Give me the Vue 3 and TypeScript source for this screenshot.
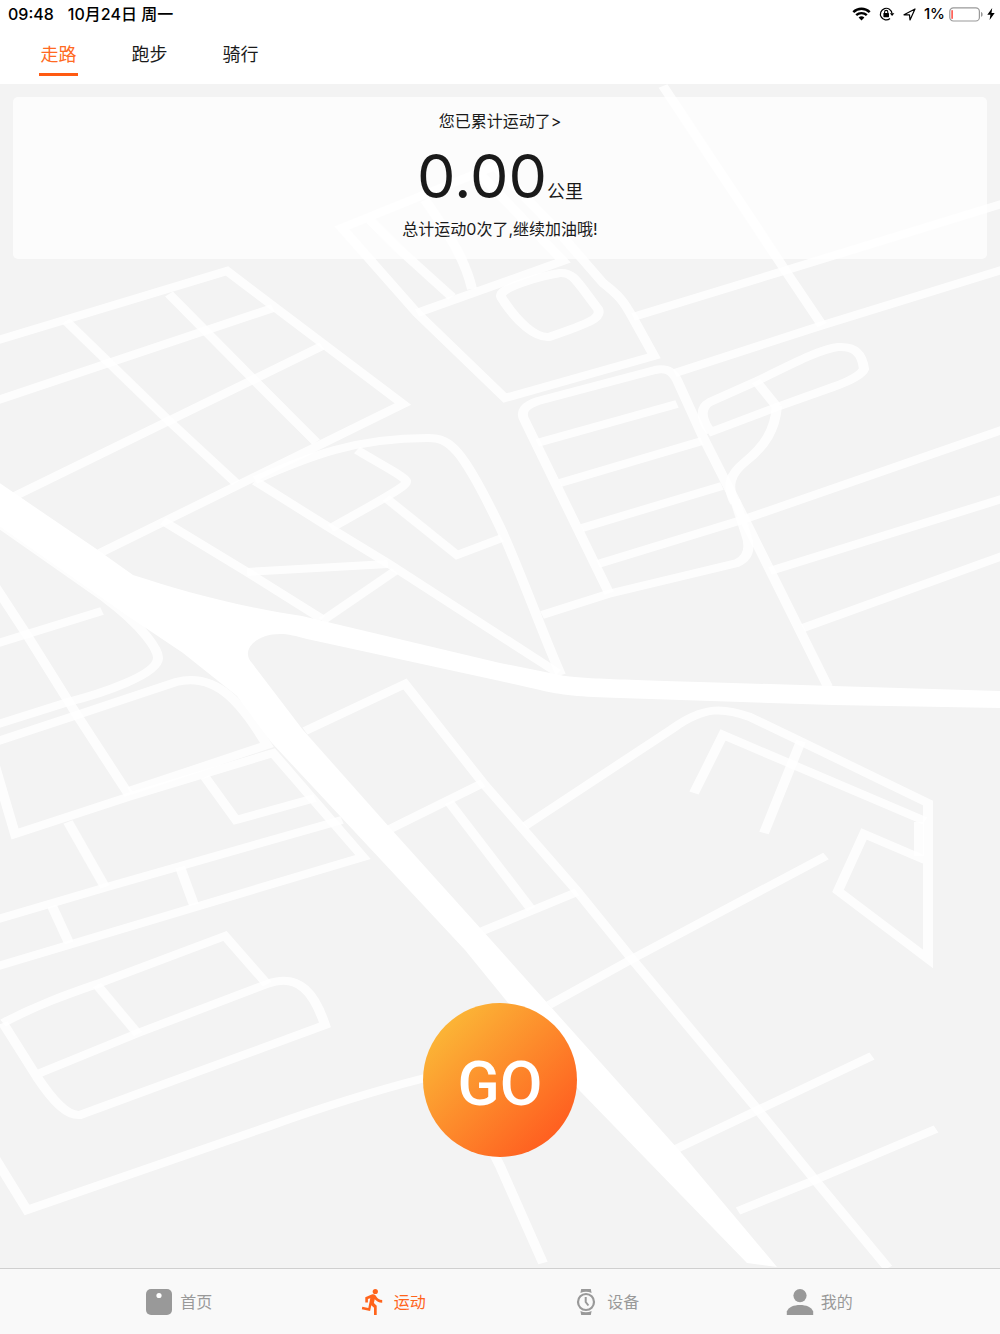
<script setup lang="ts">
import { ref } from 'vue'

type NavKey = 'home' | 'sport' | 'device' | 'mine'

const modes = ['走路', '跑步', '骑行']
const activeMode = ref(0)

const navItems: { key: NavKey; label: string }[] = [
  { key: 'home', label: '首页' },
  { key: 'sport', label: '运动' },
  { key: 'device', label: '设备' },
  { key: 'mine', label: '我的' },
]
const activeNav = ref<NavKey>('sport')

const distance = ref(0)
const count = ref(0)

const streets = [
  'M-5 341 L227 271 L403 404 L100 553',
  'M-5 401 L273 308',
  'M322 346 L15 496',
  'M66 321 L168 420 L236 483',
  'M169 294 L254 380 L316 442',
  'M255 480 C310 456 355 438 428 438 C450 438 462 448 500 527 C520 570 545 640 561 675',
  'M357 450 C380 464 404 476 406 481 C407 486 390 495 331 528',
  'M386 498 L457 555 L502 538',
  'M255 481 L330 528 L389 564 L558 673',
  'M163 521 L247 572 L322 619',
  'M247 572 L388 564',
  'M395 571 L322 621',
  'M-5 521 L105 598 C145 628 158 650 158 658 C158 675 100 694 68 702 L-5 725',
  'M-5 644 L102 611',
  'M-5 586 L27 635 L77 715 L129 795',
  'M-5 742 L77 715 L176 682 C220 671 245 710 267 745 L129 791',
  'M-5 766 L15 834 L128 797 L273 753 L363 857 L-5 967',
  'M-5 920 L107 887 L342 820',
  'M68 822 L105 887',
  'M205 777 L236 820 L315 798',
  'M180 867 L194 905',
  'M52 906 L69 943',
  'M3 1023 C35 1006 65 995 97 984 L225 936 L267 984',
  'M40 1073 L138 1033 L267 984 C300 972 315 995 325 1025 L80 1115 C68 1116 55 1104 37 1077 L3 1023',
  'M97 985 L138 1034',
  'M-5 1158 L27 1210 L267 1127 C320 1108 370 1092 425 1078',
  'M490 1146 L500 1166 L543 1263',
  'M505 398 L417 313 L342 228 L495 166 L557 230 L603 283 C620 296 624 302 633 318 L654 356 Z',
  'M417 313 L563 261 L480 174',
  'M370 220 L400 250 L452 297',
  'M425 200 C450 235 466 262 472 289',
  'M502 293 C508 286 540 276 560 273 C573 272 576 280 598 309 C602 318 590 323 549 337 C535 338 518 322 505 303 C501 297 500 296 502 293 Z',
  'M663 86 L787 273 L822 325',
  'M633 317 L790 269 L1005 203',
  'M675 373 L820 326 L1005 269',
  'M609 593 L525 421 C519 411 526 405 538 401 L655 370 C665 368 672 370 677 380 L703 437 L745 520 L828 687',
  'M537 443 L677 404',
  'M560 483 L702 441',
  'M582 528 L722 486',
  'M598 564 L745 519 L1005 429',
  'M770 571 L1005 498',
  'M803 628 L1005 555',
  'M542 615 L608 594 L737 563 C748 558 751 548 746 534 L735 500',
  'M777 406 C775 430 765 446 745 462 C730 474 726 486 735 503',
  'M708 433 L777 407 L833 387 C850 381 862 374 864 369 C862 352 853 346 838 347 C820 349 790 365 757 381 L710 402 C697 409 704 424 711 432',
  'M756 381 L777 407',
  'M525 826 L672 729 C705 705 725 708 750 717 L800 741 L928 803 L928 959 L838 891 L864 834 L925 860',
  'M919 822 L919 856',
  'M694 793 L723 735 L925 821',
  'M801 741 L764 833',
  'M549 1005 L632 959 L826 856',
  'M676 1149 L758 1110 L872 1056',
  'M738 1211 L815 1180 L936 1129',
  'M305 731 L405 684 L483 783 L577 891 L632 959 L758 1110 L815 1180 L888 1268',
  'M388 830 L483 783',
  'M449 802 L531 909',
  'M480 932 L577 892',
]

// Streets are seen at a slant, so steep ones are drawn wider than level ones:
// x is divided here and the group is scaled back by the same factor.
const SLANT = 1.25
const streetPaths = streets.map((d) =>
  d.replace(/(-?\d+) (-?\d+)/g, (_pair, x: string, y: string) => `${Number(x) / SLANT} ${y}`),
)
</script>

<template>
  <div class="app">
    <header class="top">
      <div class="status">
        <span class="time">09:48</span>
        <span>10月24日 周一</span>
        <div class="status-right">
          <svg class="wifi" width="19" height="14" viewBox="0 0 19 14" aria-hidden="true">
            <path d="M1.300 5.200 C6 .7 13 .7 17.700 5.200" fill="none" stroke="#000" stroke-width="2.500" />
            <path d="M4.200 8.200 C7.200 5.400 11.800 5.400 14.800 8.200" fill="none" stroke="#000" stroke-width="2.400" />
            <path d="M6.600 10.400 C8.300 8.900 10.700 8.900 12.400 10.400 L9.500 13.400 Z" />
          </svg>
          <svg class="lock" width="16" height="14" viewBox="0 0 16 14" aria-hidden="true">
            <path d="M13 6.500 A5.800 5.800 0 1 0 11 11.500" fill="none" stroke="#000" stroke-width="1.200" />
            <path d="M10.800 6.200 H15.400 L13.100 9 Z" />
            <rect x="4.400" y="6" width="5.600" height="4.200" rx=".6" />
            <path d="M5.600 6.200 V5 A1.600 1.600 0 0 1 8.800 5 V6.200" fill="none" stroke="#000" stroke-width="1.100" />
          </svg>
          <svg class="locate" width="13" height="13" viewBox="0 0 13 13" aria-hidden="true">
            <path d="M1 6.800 L12 1 L7 12 L6.500 6.800 Z" fill="none" stroke="#000" stroke-width="1.200" stroke-linejoin="round" />
          </svg>
          <span class="percent">1%</span>
          <svg class="battery" width="35" height="15" viewBox="0 0 35 15" aria-hidden="true">
            <rect x=".8" y=".8" width="29.600" height="13.200" rx="3.600" fill="none" stroke="#999" stroke-width="1.200" />
            <path d="M32 5 C34.200 5.600 34.200 9.200 32 9.800 Z" fill="#999" />
            <rect x="2.400" y="3" width="1.400" height="9" rx=".7" fill="#ff3b30" />
          </svg>
          <svg width="8" height="12" viewBox="0 0 8 12" aria-hidden="true">
            <path d="M5.200 0 L.3 6.800 H3.400 L2.600 12 L7.700 4.900 H4.500 Z" />
          </svg>
        </div>
      </div>
      <nav class="modes">
        <button
          v-for="(mode, i) in modes"
          :key="mode"
          type="button"
          :class="{ active: i === activeMode }"
          @click="activeMode = i"
        >{{ mode }}</button>
      </nav>
    </header>

    <main class="stage">
      <svg class="map" viewBox="0 84 1000 1184" preserveAspectRatio="xMidYMid slice" aria-hidden="true">
        <g class="streets" :transform="`scale(${SLANT} 1)`">
          <path v-for="d in streetPaths" :key="d" :d="d" />
        </g>
        <path
          class="highway"
          d="M-2 482 L95 548 L133 575 C180 590 230 605 302 616 L500 663 L555 674 C570 678 600 679 700 682 L833 686 L1002 691 V708 L833 705 L620 698 C580 697 560 695 540 690 L500 681 L307 639 C296 636 288 634 280 634 C256 634 240 650 252 663 L303 730 L391 829 L500 950 L550 1006 L678 1149 L777 1267 L747 1263 L579 1090 L465 950 L271 742 L237 696 L183 653 L122 612 L-2 525 Z"
        />
      </svg>

      <section class="card">
        <a class="caption" href="#records">您已累计运动了&gt;</a>
        <p class="total"><span class="number">{{ distance.toFixed(2) }}</span><span class="unit">公里</span></p>
        <p class="caption">总计运动{{ count }}次了,继续加油哦!</p>
      </section>

      <button class="go" type="button">GO</button>
    </main>

    <nav class="tabbar">
      <button
        v-for="item in navItems"
        :key="item.key"
        type="button"
        :class="{ active: item.key === activeNav }"
        @click="activeNav = item.key"
      >
        <svg width="28" height="28" viewBox="0 0 28 28" aria-hidden="true">
          <template v-if="item.key === 'home'">
            <rect x="1" y="1" width="26" height="26" rx="5" />
            <circle cx="14" cy="7.500" r="2.600" fill="#fff" />
          </template>
          <template v-else-if="item.key === 'sport'">
            <circle cx="16.300" cy="3.500" r="2.600" />
            <path d="M12.700 6.600 L6.300 9.300 V14.600 H8.900 V11 L11.300 10.200 L9.300 19.900 L3.300 18.700 L2.800 21.200 L11.100 22.900 L12.300 17.200 L15 19.800 V27 H17.700 V17.800 L14.900 15.100 L15.700 11.200 C17.500 13.200 20 14.500 23.200 14.700 V12.100 C20.500 11.900 18.600 10.700 17.300 8.500 C16.200 6.700 14.900 5.900 12.700 6.600 Z" />
          </template>
          <template v-else-if="item.key === 'device'">
            <path d="M9.200 1 H18.800 L19.600 5 C16 3.400 12 3.400 8.400 5 Z" />
            <path d="M9.200 27 H18.800 L19.600 23 C16 24.600 12 24.600 8.400 23 Z" />
            <circle cx="14" cy="14" r="8" fill="none" stroke="currentColor" stroke-width="2.200" />
            <path d="M13.700 9 V14 L16.400 17.500" fill="none" stroke="currentColor" stroke-width="2" />
          </template>
          <template v-else>
            <circle cx="14" cy="7.600" r="6.600" />
            <path d="M.8 27 V23.500 C2.500 19 8 17 14 17 S25.500 19 27.200 23.500 V27 Z" />
          </template>
        </svg>
        <span>{{ item.label }}</span>
      </button>
    </nav>
  </div>
</template>

<style>
body {
  margin: 0;
}
</style>

<style scoped>
.app {
  display: flex;
  flex-direction: column;
  min-height: 100vh;
  background: #f3f3f3;
  color: #1a1a1a;
  font-family: Inter, "Noto Sans CJK SC", sans-serif;
}

button {
  padding: 0;
  border: 0;
  background: none;
  color: inherit;
  font: inherit;
  cursor: pointer;
}

.top {
  background: #fff;
}

.status {
  display: flex;
  align-items: center;
  height: 28px;
  padding: 0 5px 0 8px;
  color: #000;
  font-size: 16px;
  font-weight: 500;
  line-height: 28px;
}

.time {
  margin-right: 14px;
}

.percent {
  font-size: 15px;
}

.status-right {
  display: flex;
  align-items: center;
  margin-left: auto;
}

.wifi,
.lock,
.locate {
  margin-right: 8px;
}

.battery {
  margin: 0 3px 0 4px;
}

.modes {
  display: flex;
  gap: 52px;
  height: 56px;
  padding: 0 39px;
}

.modes button {
  box-sizing: border-box;
  width: 39px;
  height: 48px;
  padding-top: 9px;
  border-bottom: 3px solid transparent;
  font-size: 18px;
  line-height: 36px;
}

.modes .active {
  border-color: #ff5a12;
  color: #ff6a22;
}

.stage {
  position: relative;
  display: flex;
  flex: 1;
  flex-direction: column;
  align-items: center;
  overflow: hidden;
}

.map {
  position: absolute;
  inset: 0;
  width: 100%;
  height: 100%;
}

.streets {
  fill: none;
  stroke: rgba(255, 255, 255, 0.84);
  stroke-width: 8;
}

.highway {
  fill: #fff;
}

.card {
  position: relative;
  display: flex;
  flex-direction: column;
  align-items: center;
  align-self: stretch;
  box-sizing: border-box;
  margin: 13px 13px 0;
  padding: 12px 0 18px;
  border-radius: 5px;
  background: rgba(255, 255, 255, 0.76);
}

.caption {
  margin: 0;
  color: #1a1a1a;
  font-size: 16px;
  line-height: 24px;
  text-decoration: none;
}

.total {
  display: flex;
  align-items: baseline;
  margin: 0;
  height: 84px;
  line-height: 87px;
}

.number {
  font-size: 61px;
}

.unit {
  font-size: 18px;
}

.go {
  position: relative;
  box-sizing: border-box;
  width: 154px;
  height: 154px;
  margin: auto 0 111px;
  padding-top: 8px;
  border-radius: 50%;
  background: linear-gradient(135deg, #fbbc38 8%, #ff5a1f 90%);
  color: #fff;
  font-family: Roboto, sans-serif;
  font-size: 62px;
  font-weight: 500;
  line-height: 146px;
}

.tabbar {
  display: flex;
  height: 65px;
  padding: 0 74px 0 72px;
  border-top: 1px solid #cfcfcf;
  background: #f9f9f9;
  color: #999;
}

.tabbar button {
  display: flex;
  flex: 1;
  align-items: center;
  justify-content: center;
  gap: 7px;
  font-size: 16px;
  line-height: 24px;
}

.tabbar svg,
.status svg {
  flex: none;
  fill: currentColor;
}

.tabbar .active {
  color: #ff641c;
}
</style>
